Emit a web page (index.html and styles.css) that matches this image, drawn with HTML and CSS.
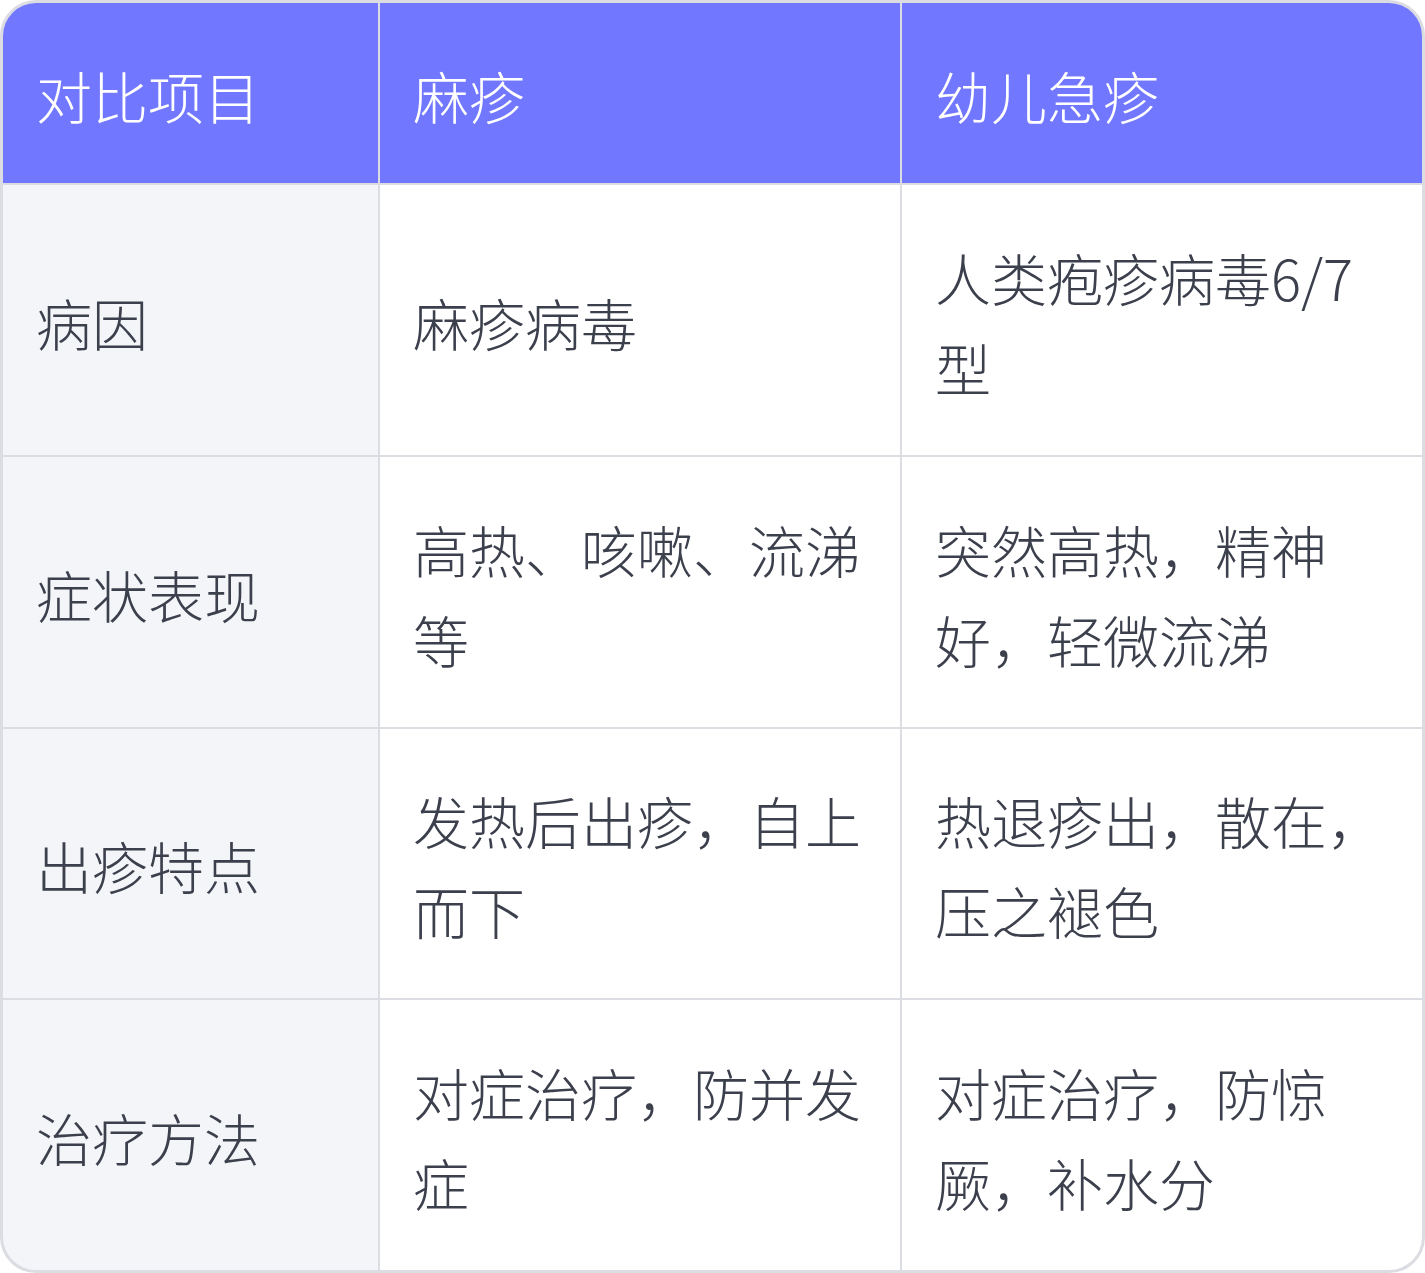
FILE: index.html
```html
<!DOCTYPE html>
<html lang="zh-CN">
<head>
<meta charset="utf-8">
<title>麻疹与幼儿急疹对比</title>
<link rel="stylesheet" href="styles.css">
</head>
<body>
<div class="compare">
  <div class="cell head">对比项目</div>
  <div class="cell head">麻疹</div>
  <div class="cell head">幼儿急疹</div>

  <div class="cell label">病因</div>
  <div class="cell">麻疹病毒</div>
  <div class="cell">人类疱疹病毒6/7型</div>

  <div class="cell label">症状表现</div>
  <div class="cell">高热、咳嗽、流涕等</div>
  <div class="cell">突然高热，精神好，轻微流涕</div>

  <div class="cell label">出疹特点</div>
  <div class="cell">发热后出疹，自上而下</div>
  <div class="cell">热退疹出，散在，压之褪色</div>

  <div class="cell label">治疗方法</div>
  <div class="cell">对症治疗，防并发症</div>
  <div class="cell">对症治疗，防惊厥，补水分</div>
</div>
</body>
</html>
```

FILE: styles.css
```css
html, body {
  margin: 0;
  padding: 0;
  background: #ffffff;
}

.compare {
  box-sizing: border-box;
  width: 1425px;
  height: 1273px;
  display: grid;
  grid-template-columns: 375px 520px 520px;
  grid-template-rows: 180px 1fr 1fr 1fr 1fr;
  gap: 2px;
  background: #dcdde3;
  border: 3px solid #dcdde3;
  border-radius: 36px;
  overflow: hidden;
  font-family: "Noto Sans CJK SC", "Noto Sans", sans-serif;
  font-weight: 300;
  font-size: 56px;
  line-height: 90px;
  color: #3c404d;
}

.cell {
  background: #ffffff;
  padding: 4px 34px 0 33px;
  display: flex;
  align-items: center;
  line-break: strict;
}

.cell.head {
  background: #7177ff;
  color: #ffffff;
}

.cell.label {
  background: #f4f5f9;
}
```
